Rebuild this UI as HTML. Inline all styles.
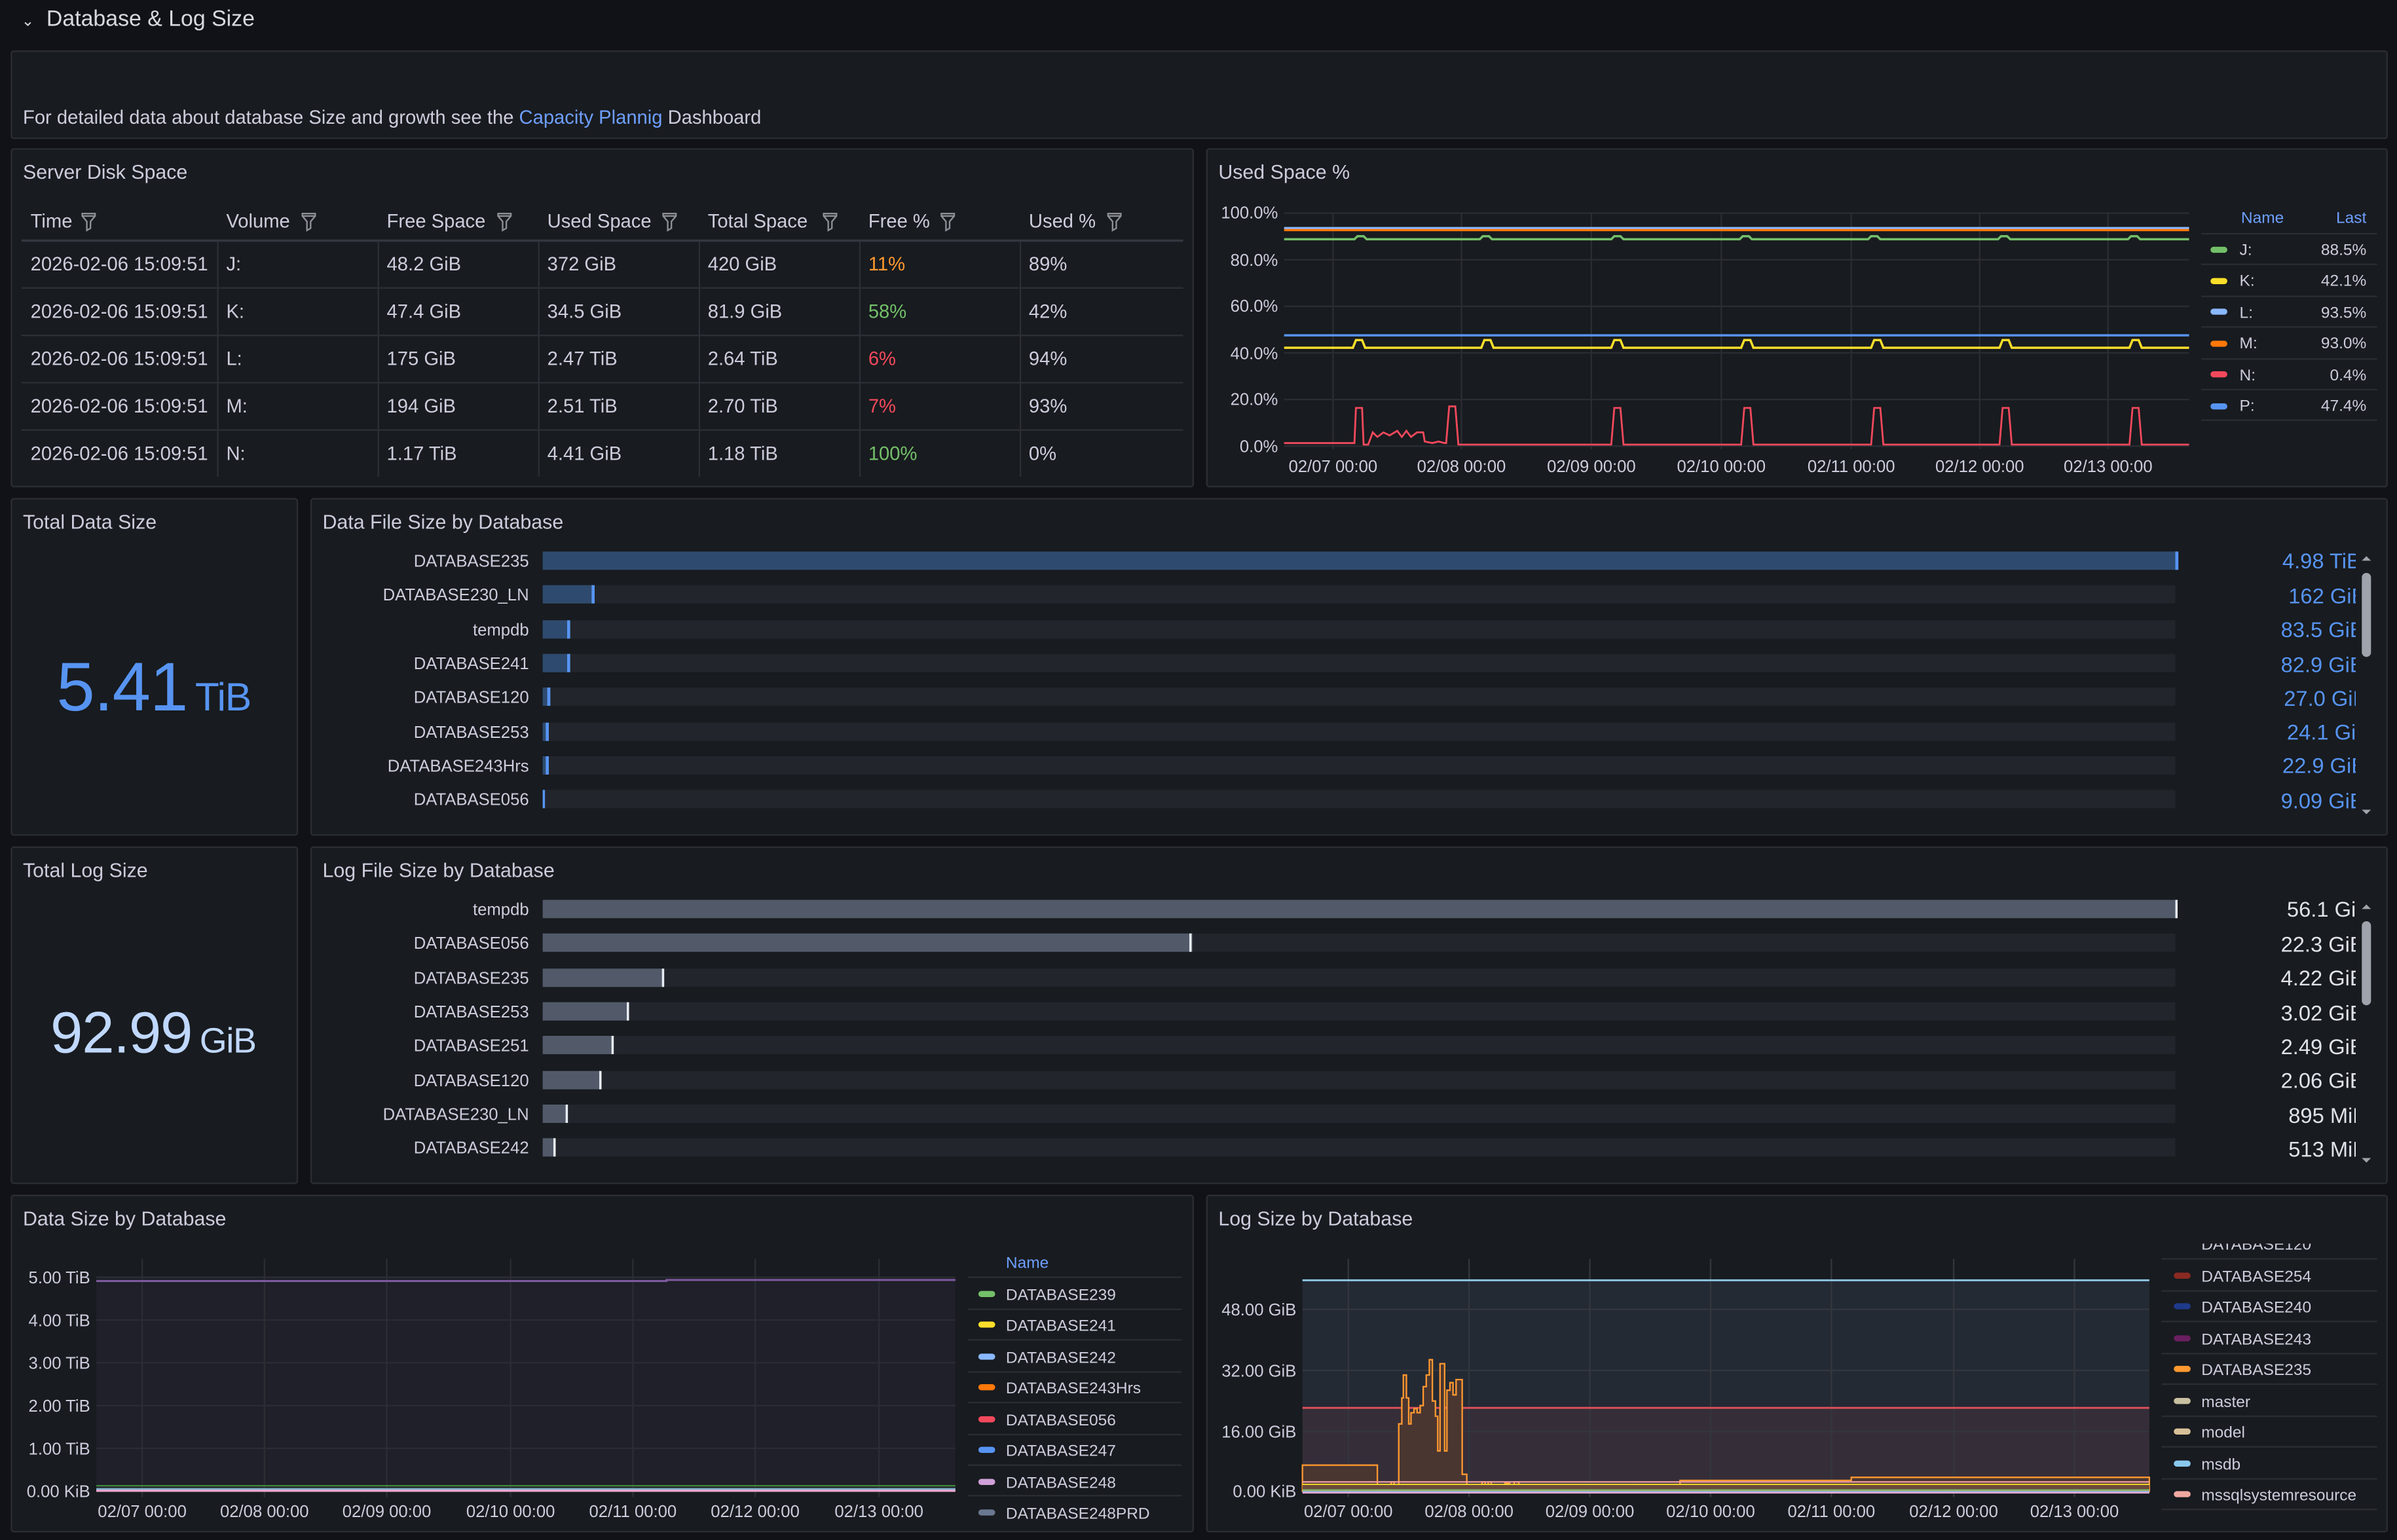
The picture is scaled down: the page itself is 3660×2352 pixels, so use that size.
<!DOCTYPE html>
<html><head><meta charset="utf-8"><style>
*{box-sizing:border-box;margin:0;padding:0}
html,body{width:3660px;height:2352px;background:#111217;overflow:hidden}
#w{position:absolute;left:0;top:0;width:1568px;height:1008px;transform:scale(2.33418,2.33333);transform-origin:0 0;font-family:"Liberation Sans",sans-serif;color:#ccccdc;font-size:12px}
.p{position:absolute;background:#181b1f;border:1px solid #2a2d33;border-radius:2px}
.t{position:absolute;left:7px;top:7px;font-size:13px;color:#ccccdc}
.a{position:absolute;white-space:nowrap}
svg{position:absolute;left:0;top:0;overflow:visible}
.th{position:absolute;top:138px;font-size:12.5px;color:#ccccdc;white-space:nowrap}
.th i{display:inline-block;width:10px;height:12px;margin-left:4px;vertical-align:-2px;background:none}
.td{position:absolute;font-size:12.5px}
</style></head><body><div id="w">
<div class="a" style="left:14px;top:5px;font-size:14.5px;color:#d8d9e0"><span style="font-size:10px;margin-right:8px">⌄</span>Database &amp; Log Size</div>

<div class="p" style="left:7px;top:33px;width:1555px;height:58px"><div class="a" style="left:7px;top:36px;font-size:12.5px">For detailed data about database Size and growth see the <span style="color:#6e9fff">Capacity Plannig</span> Dashboard</div></div>

<!-- Server Disk Space -->
<div class="p" style="left:7px;top:97px;width:774px;height:222px"><div class="t">Server Disk Space</div></div>
<svg width="1568" height="1008">
<g stroke="#2c2f36" stroke-width="1"><line x1="14" y1="157.5" x2="774" y2="157.5" stroke="#34373e" stroke-width="1.5"/>
<line x1="14" y1="188.5" x2="774" y2="188.5"/><line x1="14" y1="219.5" x2="774" y2="219.5"/><line x1="14" y1="250.5" x2="774" y2="250.5"/><line x1="14" y1="281.5" x2="774" y2="281.5"/>
<line x1="142.5" y1="158" x2="142.5" y2="312"/><line x1="247.5" y1="158" x2="247.5" y2="312"/><line x1="352.5" y1="158" x2="352.5" y2="312"/><line x1="457.5" y1="158" x2="457.5" y2="312"/><line x1="562.5" y1="158" x2="562.5" y2="312"/><line x1="667.5" y1="158" x2="667.5" y2="312"/></g>
<defs><g id="fn"><path d="M0.8 0.8h8.4v1.6l-3 3.6v4.4l-2.4 1.4v-5.8l-3-3.6z M0.8 2.4h8.4" fill="none" stroke="#8e9098" stroke-width="1"/></g></defs>
<use href="#fn" x="53" y="139"/><use href="#fn" x="197" y="139"/><use href="#fn" x="325" y="139"/><use href="#fn" x="433" y="139"/><use href="#fn" x="538" y="139"/><use href="#fn" x="615" y="139"/><use href="#fn" x="724" y="139"/>
</svg>
<div class="th" style="left:20px">Time</div><div class="th" style="left:148px">Volume</div><div class="th" style="left:253px">Free Space</div><div class="th" style="left:358px">Used Space</div><div class="th" style="left:463px">Total Space</div><div class="th" style="left:568px">Free %</div><div class="th" style="left:673px">Used %</div>
<div class="td" style="left:20px;top:166px">2026-02-06 15:09:51</div><div class="td" style="left:148px;top:166px">J:</div><div class="td" style="left:253px;top:166px">48.2 GiB</div><div class="td" style="left:358px;top:166px">372 GiB</div><div class="td" style="left:463px;top:166px">420 GiB</div><div class="td" style="left:568px;top:166px;color:#ff9830">11%</div><div class="td" style="left:673px;top:166px">89%</div>
<div class="td" style="left:20px;top:197px">2026-02-06 15:09:51</div><div class="td" style="left:148px;top:197px">K:</div><div class="td" style="left:253px;top:197px">47.4 GiB</div><div class="td" style="left:358px;top:197px">34.5 GiB</div><div class="td" style="left:463px;top:197px">81.9 GiB</div><div class="td" style="left:568px;top:197px;color:#73bf69">58%</div><div class="td" style="left:673px;top:197px">42%</div>
<div class="td" style="left:20px;top:228px">2026-02-06 15:09:51</div><div class="td" style="left:148px;top:228px">L:</div><div class="td" style="left:253px;top:228px">175 GiB</div><div class="td" style="left:358px;top:228px">2.47 TiB</div><div class="td" style="left:463px;top:228px">2.64 TiB</div><div class="td" style="left:568px;top:228px;color:#f2495c">6%</div><div class="td" style="left:673px;top:228px">94%</div>
<div class="td" style="left:20px;top:259px">2026-02-06 15:09:51</div><div class="td" style="left:148px;top:259px">M:</div><div class="td" style="left:253px;top:259px">194 GiB</div><div class="td" style="left:358px;top:259px">2.51 TiB</div><div class="td" style="left:463px;top:259px">2.70 TiB</div><div class="td" style="left:568px;top:259px;color:#f2495c">7%</div><div class="td" style="left:673px;top:259px">93%</div>
<div class="td" style="left:20px;top:290px">2026-02-06 15:09:51</div><div class="td" style="left:148px;top:290px">N:</div><div class="td" style="left:253px;top:290px">1.17 TiB</div><div class="td" style="left:358px;top:290px">4.41 GiB</div><div class="td" style="left:463px;top:290px">1.18 TiB</div><div class="td" style="left:568px;top:290px;color:#73bf69">100%</div><div class="td" style="left:673px;top:290px">0%</div>

<!-- Used Space % -->
<div class="p" style="left:789px;top:97px;width:773px;height:222px"><div class="t">Used Space %</div></div>
<svg width="1568" height="1008" font-family="Liberation Sans" font-size="11" fill="#ccccdc">
<g stroke="#2a2d33"><line x1="840" y1="139.5" x2="1432" y2="139.5"/><line x1="840" y1="170" x2="1432" y2="170"/><line x1="840" y1="200.5" x2="1432" y2="200.5"/><line x1="840" y1="231" x2="1432" y2="231"/><line x1="840" y1="261.5" x2="1432" y2="261.5"/><line x1="840" y1="292" x2="1432" y2="292"/>
<line x1="872" y1="139" x2="872" y2="294"/><line x1="956" y1="139" x2="956" y2="294"/><line x1="1041" y1="139" x2="1041" y2="294"/><line x1="1126" y1="139" x2="1126" y2="294"/><line x1="1211" y1="139" x2="1211" y2="294"/><line x1="1295" y1="139" x2="1295" y2="294"/><line x1="1379" y1="139" x2="1379" y2="294"/></g>
<g text-anchor="end"><text x="836" y="143">100.0%</text><text x="836" y="174">80.0%</text><text x="836" y="204">60.0%</text><text x="836" y="235">40.0%</text><text x="836" y="265">20.0%</text><text x="836" y="296">0.0%</text></g>
<g text-anchor="middle"><text x="872" y="309">02/07 00:00</text><text x="956" y="309">02/08 00:00</text><text x="1041" y="309">02/09 00:00</text><text x="1126" y="309">02/10 00:00</text><text x="1211" y="309">02/11 00:00</text><text x="1295" y="309">02/12 00:00</text><text x="1379" y="309">02/13 00:00</text></g>
<g fill="none" stroke-width="1.5">
<path d="M840 149.3H1432" stroke="#8ab8ff"/>
<path d="M840 150.6H1432" stroke="#ff780a"/>
<path d="M840 156.6H886l2-2h4l2 2H968l2-2h4l2 2H1054l2-2h4l2 2H1138l2-2h4l2 2H1222l2-2h4l2 2H1307l2-2h4l2 2H1392l2-2h4l2 2H1432" stroke="#73bf69"/>
<path d="M840 219.5H1432" stroke="#5794f2"/>
<path d="M840 227.6H885l2-5h4l2 5H969l2-5h4l2 5H1054l2-5h4l2 5H1139l2-5h4l2 5H1224l2-5h4l2 5H1308l2-5h4l2 5H1393l2-5h4l2 5H1432" stroke="#fade2a"/>
<path d="M840 290H886l1-23h4l1 24 3 0 3-8 3 3 4-3 4 2 5-3 3 4 3-4 3 4 4-3 4 0 1 6 5 1 4-1 4 1 1 0 2-24h4l2 25H1054l2-24h4l2 24H1139l2-24h4l2 24H1224l2-24h4l2 24H1308l2-24h4l2 24H1393l2-24h4l2 24H1432" stroke="#f2495c" stroke-width="1.2"/>
</g>
<text x="1480" y="146" fill="#6e9fff" text-anchor="middle" font-size="10.5">Name</text><text x="1548" y="146" fill="#6e9fff" text-anchor="end" font-size="10.5">Last</text>
<g stroke="#2a2d33"><line x1="1440" y1="153" x2="1555" y2="153"/><line x1="1440" y1="173" x2="1555" y2="173"/><line x1="1440" y1="194" x2="1555" y2="194"/><line x1="1440" y1="214" x2="1555" y2="214"/><line x1="1440" y1="235" x2="1555" y2="235"/><line x1="1440" y1="255" x2="1555" y2="255"/><line x1="1440" y1="275" x2="1555" y2="275"/></g>
<g font-size="10.5"><rect x="1446" y="161.5" width="11" height="4" rx="2" fill="#73bf69"/><text x="1465" y="167">J:</text><text x="1548" y="167" text-anchor="end">88.5%</text>
<rect x="1446" y="182" width="11" height="4" rx="2" fill="#fade2a"/><text x="1465" y="187">K:</text><text x="1548" y="187" text-anchor="end">42.1%</text>
<rect x="1446" y="202" width="11" height="4" rx="2" fill="#8ab8ff"/><text x="1465" y="208">L:</text><text x="1548" y="208" text-anchor="end">93.5%</text>
<rect x="1446" y="223" width="11" height="4" rx="2" fill="#ff780a"/><text x="1465" y="228">M:</text><text x="1548" y="228" text-anchor="end">93.0%</text>
<rect x="1446" y="243" width="11" height="4" rx="2" fill="#f2495c"/><text x="1465" y="249">N:</text><text x="1548" y="249" text-anchor="end">0.4%</text>
<rect x="1446" y="264" width="11" height="4" rx="2" fill="#5794f2"/><text x="1465" y="269">P:</text><text x="1548" y="269" text-anchor="end">47.4%</text></g>
</svg>

<!-- Totals -->
<div class="p" style="left:7px;top:326px;width:188px;height:221px"><div class="t">Total Data Size</div><div class="a" style="left:29px;top:97px;color:#5794f2;font-size:45px;letter-spacing:-0.5px">5.41<span style="font-size:26px;margin-left:5px">TiB</span></div></div>
<div class="p" style="left:7px;top:554px;width:188px;height:221px"><div class="t">Total Log Size</div><div class="a" style="left:25px;top:101px;color:#c0d8ff;font-size:38px;letter-spacing:-0.5px">92.99<span style="font-size:23px;margin-left:5px">GiB</span></div></div>

<div class="p" style="left:203px;top:326px;width:1359px;height:221px"><div class="t">Data File Size by Database</div></div>
<div class="p" style="left:203px;top:554px;width:1359px;height:221px"><div class="t">Log File Size by Database</div></div>
<svg width="1568" height="1008" font-family="Liberation Sans" font-size="11" fill="#ccccdc">
<g fill="#22252b"><rect x="355" y="361" width="1068" height="12"/><rect x="355" y="383" width="1068" height="12"/><rect x="355" y="406" width="1068" height="12"/><rect x="355" y="428" width="1068" height="12"/><rect x="355" y="450" width="1068" height="12"/><rect x="355" y="473" width="1068" height="12"/><rect x="355" y="495" width="1068" height="12"/><rect x="355" y="517" width="1068" height="12"/>
<rect x="355" y="589" width="1068" height="12"/><rect x="355" y="611" width="1068" height="12"/><rect x="355" y="634" width="1068" height="12"/><rect x="355" y="656" width="1068" height="12"/><rect x="355" y="678" width="1068" height="12"/><rect x="355" y="701" width="1068" height="12"/><rect x="355" y="723" width="1068" height="12"/><rect x="355" y="745" width="1068" height="12"/></g>
<g fill="#2e4a6e"><rect x="355" y="361" width="1069" height="12"/><rect x="355" y="383" width="33" height="12"/><rect x="355" y="406" width="17" height="12"/><rect x="355" y="428" width="17" height="12"/><rect x="355" y="450" width="5" height="12"/><rect x="355" y="473" width="4" height="12"/><rect x="355" y="495" width="4" height="12"/><rect x="355" y="517" width="1" height="12"/></g>
<g fill="#5794f2"><rect x="1423" y="361" width="2" height="12"/><rect x="387" y="383" width="2" height="12"/><rect x="371" y="406" width="2" height="12"/><rect x="371" y="428" width="2" height="12"/><rect x="358" y="450" width="2" height="12"/><rect x="357" y="473" width="2" height="12"/><rect x="357" y="495" width="2" height="12"/><rect x="355" y="517" width="1.5" height="12"/></g>
<g fill="#525a6a"><rect x="355" y="589" width="1069" height="12"/><rect x="355" y="611" width="425" height="12"/><rect x="355" y="634" width="79" height="12"/><rect x="355" y="656" width="56" height="12"/><rect x="355" y="678" width="46" height="12"/><rect x="355" y="701" width="38" height="12"/><rect x="355" y="723" width="16" height="12"/><rect x="355" y="745" width="8" height="12"/></g>
<g fill="#e8ecf4"><rect x="1423" y="589" width="1.5" height="12"/><rect x="778" y="611" width="1.5" height="12"/><rect x="433" y="634" width="1.5" height="12"/><rect x="410" y="656" width="1.5" height="12"/><rect x="400" y="678" width="1.5" height="12"/><rect x="392" y="701" width="1.5" height="12"/><rect x="370" y="723" width="1.5" height="12"/><rect x="362" y="745" width="1.5" height="12"/></g>
<g text-anchor="end"><text x="346" y="371">DATABASE235</text><text x="346" y="393">DATABASE230_LN</text><text x="346" y="416">tempdb</text><text x="346" y="438">DATABASE241</text><text x="346" y="460">DATABASE120</text><text x="346" y="483">DATABASE253</text><text x="346" y="505">DATABASE243Hrs</text><text x="346" y="527">DATABASE056</text>
<text x="346" y="599">tempdb</text><text x="346" y="621">DATABASE056</text><text x="346" y="644">DATABASE235</text><text x="346" y="666">DATABASE253</text><text x="346" y="688">DATABASE251</text><text x="346" y="711">DATABASE120</text><text x="346" y="733">DATABASE230_LN</text><text x="346" y="755">DATABASE242</text></g>
<g font-size="14" fill="#5794f2"><text x="1493" y="372">4.98 TiB</text><text x="1497" y="395">162 GiB</text><text x="1492" y="417">83.5 GiB</text><text x="1492" y="440">82.9 GiB</text><text x="1494" y="462">27.0 GiB</text><text x="1496" y="484">24.1 GiB</text><text x="1493" y="506">22.9 GiB</text><text x="1492" y="529">9.09 GiB</text></g>
<g font-size="14" fill="#e0e2ea"><text x="1496" y="600">56.1 GiB</text><text x="1492" y="623">22.3 GiB</text><text x="1492" y="645">4.22 GiB</text><text x="1492" y="668">3.02 GiB</text><text x="1492" y="690">2.49 GiB</text><text x="1492" y="712">2.06 GiB</text><text x="1497" y="735">895 MiB</text><text x="1497" y="757">513 MiB</text></g>
<rect x="1541" y="360" width="14" height="180" fill="#181b1f"/><rect x="1541" y="588" width="14" height="180" fill="#181b1f"/>
<g fill="#9fa3ab"><rect x="1545" y="375" width="6" height="55" rx="3"/><rect x="1545" y="603" width="6" height="55" rx="3"/><path d="M1545 367l3-3 3 3z M1545 530l3 3 3-3z M1545 595l3-3 3 3z M1545 758l3 3 3-3z"/></g>
</svg>

<!-- Bottom -->
<div class="p" style="left:7px;top:782px;width:774px;height:221px"><div class="t">Data Size by Database</div></div>
<div class="p" style="left:789px;top:782px;width:773px;height:221px"><div class="t">Log Size by Database</div></div>
<svg width="1568" height="1008" font-family="Liberation Sans" font-size="11" fill="#ccccdc">
<defs><clipPath id="lc"><rect x="1414" y="814" width="150" height="190"/></clipPath></defs>
<rect x="63" y="836" width="562" height="140" fill="#1f2029"/>
<g stroke="#2a2d33"><line x1="63" y1="836" x2="625" y2="836"/><line x1="63" y1="864" x2="625" y2="864"/><line x1="63" y1="892" x2="625" y2="892"/><line x1="63" y1="920" x2="625" y2="920"/><line x1="63" y1="948" x2="625" y2="948"/>
<line x1="93" y1="824" x2="93" y2="980"/><line x1="173" y1="824" x2="173" y2="980"/><line x1="253" y1="824" x2="253" y2="980"/><line x1="334" y1="824" x2="334" y2="980"/><line x1="414" y1="824" x2="414" y2="980"/><line x1="494" y1="824" x2="494" y2="980"/><line x1="575" y1="824" x2="575" y2="980"/></g>
<path d="M63 838.5H436v-0.7H625" stroke="#7e5ba0" stroke-width="1.3" fill="none"/>
<rect x="63" y="972" width="562" height="1" fill="#3f8a3a"/><rect x="63" y="974" width="562" height="1" fill="#7fb2d0"/><rect x="63" y="975" width="562" height="1.5" fill="#e8a8d0"/>
<g text-anchor="end"><text x="59" y="840">5.00 TiB</text><text x="59" y="868">4.00 TiB</text><text x="59" y="896">3.00 TiB</text><text x="59" y="924">2.00 TiB</text><text x="59" y="952">1.00 TiB</text><text x="59" y="980">0.00 KiB</text></g>
<g text-anchor="middle"><text x="93" y="993">02/07 00:00</text><text x="173" y="993">02/08 00:00</text><text x="253" y="993">02/09 00:00</text><text x="334" y="993">02/10 00:00</text><text x="414" y="993">02/11 00:00</text><text x="494" y="993">02/12 00:00</text><text x="575" y="993">02/13 00:00</text></g>
<text x="658" y="830" fill="#6e9fff" font-size="10.5">Name</text>
<g stroke="#2a2d33"><line x1="633" y1="836" x2="773" y2="836"/><line x1="633" y1="857" x2="773" y2="857"/><line x1="633" y1="877" x2="773" y2="877"/><line x1="633" y1="898" x2="773" y2="898"/><line x1="633" y1="918" x2="773" y2="918"/><line x1="633" y1="939" x2="773" y2="939"/><line x1="633" y1="959" x2="773" y2="959"/><line x1="633" y1="979" x2="773" y2="979"/></g>
<g font-size="10.5"><rect x="640" y="845" width="11" height="4" rx="2" fill="#73bf69"/><text x="658" y="851">DATABASE239</text>
<rect x="640" y="865" width="11" height="4" rx="2" fill="#fade2a"/><text x="658" y="871">DATABASE241</text>
<rect x="640" y="886" width="11" height="4" rx="2" fill="#8ab8ff"/><text x="658" y="892">DATABASE242</text>
<rect x="640" y="906" width="11" height="4" rx="2" fill="#ff780a"/><text x="658" y="912">DATABASE243Hrs</text>
<rect x="640" y="927" width="11" height="4" rx="2" fill="#f2495c"/><text x="658" y="933">DATABASE056</text>
<rect x="640" y="947" width="11" height="4" rx="2" fill="#5794f2"/><text x="658" y="953">DATABASE247</text>
<rect x="640" y="968" width="11" height="4" rx="2" fill="#d0a0d8"/><text x="658" y="974">DATABASE248</text>
<rect x="640" y="988" width="11" height="4" rx="2" fill="#6a7890"/><text x="658" y="994">DATABASE248PRD</text></g>

<!-- Log size chart -->
<rect x="852" y="838" width="554" height="83" fill="#242a34"/>
<rect x="852" y="921" width="554" height="55" fill="#352e38"/>
<g stroke="#33363d"><line x1="852" y1="857" x2="1406" y2="857"/><line x1="852" y1="897" x2="1406" y2="897"/><line x1="852" y1="937" x2="1406" y2="937"/>
<line x1="882" y1="824" x2="882" y2="980"/><line x1="961" y1="824" x2="961" y2="980"/><line x1="1040" y1="824" x2="1040" y2="980"/><line x1="1119" y1="824" x2="1119" y2="980"/><line x1="1198" y1="824" x2="1198" y2="980"/><line x1="1278" y1="824" x2="1278" y2="980"/><line x1="1357" y1="824" x2="1357" y2="980"/></g>
<line x1="852" y1="838" x2="1406" y2="838" stroke="#8ec8e8" stroke-width="1.2"/>
<line x1="852" y1="921.5" x2="1406" y2="921.5" stroke="#e0505c" stroke-width="1.2"/>
<path d="M852 959H901V976h2v-3h3v2h2v-3h2v-2h2v2h2v1h1V932h2V915h1v-15h2v15h1.5V932h1.5V924.7h2V922h2v2.7h2V920h2V907.6h2V900h2V890h2V917h2V927h1.5V949.7h1.5V892.6h3V949.7h1.5V910h2V905h2V913h2V903h4V965h3V976h2v-3h2v2h2v-3h2v1h2v-3h2v3h2v-3h2v4h3v-2h3v2h3v-3h3v2h3v-3h3v2h3v3h5v-3h3v3h8v-2h4v2H1042V974H1069.5V971.8H1099V969H1211V967H1406V976H852Z" fill="#4a3630" stroke="#ff9830" stroke-width="1" stroke-linejoin="miter"/>
<rect x="852" y="969.5" width="554" height="1" fill="#f0a0a8"/>
<rect x="852" y="971.2" width="554" height="0.8" fill="#fade2a"/>
<rect x="852" y="972" width="554" height="3" fill="#6a4a3a"/>
<rect x="852" y="974.8" width="554" height="0.8" fill="#73bf69"/>
<rect x="852" y="975.8" width="554" height="1" fill="#8ab8e0"/>
<rect x="852" y="976.6" width="554" height="1" fill="#e8a8d0"/>
<g text-anchor="end"><text x="848" y="861">48.00 GiB</text><text x="848" y="901">32.00 GiB</text><text x="848" y="941">16.00 GiB</text><text x="848" y="980">0.00 KiB</text></g>
<g text-anchor="middle"><text x="882" y="993">02/07 00:00</text><text x="961" y="993">02/08 00:00</text><text x="1040" y="993">02/09 00:00</text><text x="1119" y="993">02/10 00:00</text><text x="1198" y="993">02/11 00:00</text><text x="1278" y="993">02/12 00:00</text><text x="1357" y="993">02/13 00:00</text></g>
<g stroke="#2a2d33"><line x1="1414" y1="824" x2="1555" y2="824"/><line x1="1414" y1="845" x2="1555" y2="845"/><line x1="1414" y1="865" x2="1555" y2="865"/><line x1="1414" y1="886" x2="1555" y2="886"/><line x1="1414" y1="906" x2="1555" y2="906"/><line x1="1414" y1="927" x2="1555" y2="927"/><line x1="1414" y1="947" x2="1555" y2="947"/><line x1="1414" y1="968" x2="1555" y2="968"/><line x1="1414" y1="988" x2="1555" y2="988"/></g>
<g clip-path="url(#lc)" font-size="10.5"><text x="1440" y="818">DATABASE120</text></g>
<g font-size="10.5"><rect x="1422" y="833" width="11" height="4" rx="2" fill="#8a2a22"/><text x="1440" y="839">DATABASE254</text>
<rect x="1422" y="853" width="11" height="4" rx="2" fill="#1f3a8a"/><text x="1440" y="859">DATABASE240</text>
<rect x="1422" y="874" width="11" height="4" rx="2" fill="#6a1f60"/><text x="1440" y="880">DATABASE243</text>
<rect x="1422" y="894" width="11" height="4" rx="2" fill="#ff9830"/><text x="1440" y="900">DATABASE235</text>
<rect x="1422" y="915" width="11" height="4" rx="2" fill="#c8c0a0"/><text x="1440" y="921">master</text>
<rect x="1422" y="935" width="11" height="4" rx="2" fill="#d8c098"/><text x="1440" y="941">model</text>
<rect x="1422" y="956" width="11" height="4" rx="2" fill="#8ac8f0"/><text x="1440" y="962">msdb</text>
<rect x="1422" y="976" width="11" height="4" rx="2" fill="#f0a8a0"/><text x="1440" y="982">mssqlsystemresource</text></g>
</svg>
</div></body></html>
